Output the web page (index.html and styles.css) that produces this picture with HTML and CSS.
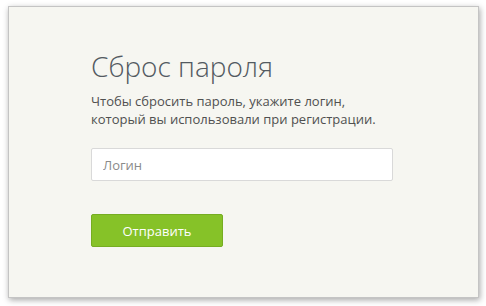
FILE: index.html
```html
<!DOCTYPE html>
<html lang="ru">
<head>
<meta charset="utf-8">
<link rel="stylesheet" href="styles.css">
</head>
<body>
<div class="panel">
  <div class="content">
    <h1 class="title">Сброс пароля</h1>
    <p class="desc">Чтобы сбросить пароль, укажите логин,<br>который вы использовали при регистрации.</p>
    <input class="field" type="text" placeholder="Логин">
    <button class="submit" type="button">Отправить</button>
  </div>
</div>
</body>
</html>
```
FILE: styles.css
```css
html, body {
  margin: 0;
  padding: 0;
  background: #ffffff;
}
body {
  padding: 6px 8px 8px 8px;
  font-family: "Open Sans", sans-serif;
}
.panel {
  width: 471px;
  height: 292px;
  box-sizing: border-box;
  background: #f6f6f1;
  border: 1px solid #c4c4c4;
  box-shadow: 1px 2px 6px rgba(0, 0, 0, 0.35);
}
.content {
  padding: 40px 0 0 82px;
  display: flex;
  flex-direction: column;
  align-items: flex-start;
}
.title {
  margin: 0;
  font-size: 28px;
  font-weight: 300;
  color: #535a61;
  line-height: 38px;
}
.desc {
  margin: 7px 0 0 0;
  font-size: 13px;
  line-height: 18px;
  color: #505050;
}
.field {
  margin-top: 20px;
  width: 302px;
  height: 33px;
  box-sizing: border-box;
  border: 1px solid #d9d9d9;
  border-radius: 2px;
  background: #ffffff;
  padding: 0 11px;
  font-family: "Open Sans", sans-serif;
  font-size: 13px;
  color: #333;
  outline: none;
}
.field::placeholder {
  color: #8a8a8a;
}
.submit {
  margin-top: 33px;
  width: 132px;
  height: 33px;
  box-sizing: border-box;
  border: 1px solid #76ad22;
  border-radius: 2px;
  background: #86c228;
  color: #ffffff;
  font-family: "Open Sans", sans-serif;
  font-size: 13px;
  padding: 0;
}
```
